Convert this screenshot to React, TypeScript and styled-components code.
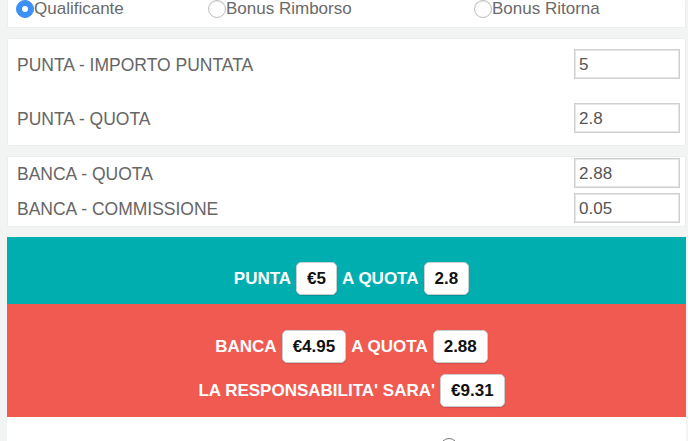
import React from "react";
import styled, { createGlobalStyle } from "styled-components";

const Global = createGlobalStyle`
  html, body { margin: 0; padding: 0; background: #ffffff; }
  body { font-family: "Liberation Sans", Arial, Helvetica, sans-serif; }
  * { box-sizing: border-box; }
`;

const Column = styled.div`
  width: 688px;
  height: 441px;
  overflow: hidden;
  background: #f2f3f3;
  padding: 0 2px 0 7px;
  display: flex;
  flex-direction: column;
  gap: 10px;
  & > * { flex-shrink: 0; }
`;

const Card = styled.div`
  background: #ffffff;
  border: 1px solid #eceeee;
  border-radius: 2px;
`;

const RadioCard = styled(Card)`
  height: 28px;
  border-top: none;
  display: grid;
  grid-template-columns: 192px 266px auto;
  align-items: start;
  padding-left: 8px;
`;

const RadioOption = styled.label`
  display: flex;
  align-items: center;
  font-size: 17px;
  line-height: 18px;
  color: #6a6a6a;
`;

const RadioDot = styled.span<{ $checked?: boolean }>`
  width: 18px;
  height: 18px;
  border-radius: 50%;
  flex: none;
  margin-top: -1px;
  background: ${(p) => (p.$checked ? "#3b8ff6" : "#ffffff")};
  border: 1px solid ${(p) => (p.$checked ? "#3b8ff6" : "#bdbdbd")};
  box-shadow: ${(p) => (p.$checked ? "none" : "inset 0 1px 1px rgba(0,0,0,0.08)")};
  display: flex;
  align-items: center;
  justify-content: center;
  &::after {
    content: "";
    width: 6px;
    height: 6px;
    border-radius: 50%;
    background: #ffffff;
    display: ${(p) => (p.$checked ? "block" : "none")};
  }
`;

const FieldCard = styled(Card)<{ $pad: string; $gap: number }>`
  padding: ${(p) => p.$pad};
  display: flex;
  flex-direction: column;
  gap: ${(p) => p.$gap}px;
`;

const Row = styled.div`
  display: flex;
  align-items: center;
  justify-content: space-between;
  height: 30px;
`;

const Label = styled.span`
  font-size: 17.5px;
  color: #666666;
  padding-left: 9px;
  padding-top: 2px;
`;

const Input = styled.input`
  width: 106px;
  height: 30px;
  margin-right: 5px;
  border: 1px solid #cfcfcf;
  box-shadow: inset 0 0 0 1px #e6e6e6;
  font-family: "Liberation Sans", Arial, sans-serif;
  font-size: 17px;
  color: #555555;
  padding: 2px 4px 0;
  background: #ffffff;
  outline: none;
`;

const ResultGroup = styled.div`
  display: flex;
  flex-direction: column;
`;

const Band = styled.div<{ $bg: string; $pad: string; $gap: number }>`
  background: ${(p) => p.$bg};
  padding: ${(p) => p.$pad};
  padding-left: 10px;
  display: flex;
  flex-direction: column;
  align-items: center;
  gap: ${(p) => p.$gap}px;
`;

const Line = styled.div`
  display: flex;
  align-items: center;
  gap: 5px;
  font-size: 17px;
  font-weight: 700;
  color: #ffffff;
  height: 33px;
`;

const Pill = styled.span`
  height: 33px;
  display: flex;
  align-items: center;
  padding: 1px 10px 0;
  background: #ffffff;
  border: 1px solid #c9cdd0;
  border-radius: 5px;
  box-shadow: 0 1px 1px rgba(0, 0, 0, 0.15);
  color: #111111;
  font-weight: 700;
  font-size: 17px;
`;

const BottomCard = styled.div`
  background: #ffffff;
  height: 60px;
  padding: 21px 0 0 433px;
`;

const BottomRadio = styled.span`
  display: block;
  width: 18px;
  height: 18px;
  border-radius: 50%;
  border: 1.5px solid #777777;
  background: #ffffff;
`;

export default function App() {
  return (
    <>
      <Global />
      <Column>
        <RadioCard>
          <RadioOption>
            <RadioDot $checked />
            Qualificante
          </RadioOption>
          <RadioOption>
            <RadioDot />
            Bonus Rimborso
          </RadioOption>
          <RadioOption>
            <RadioDot />
            Bonus Ritorna
          </RadioOption>
        </RadioCard>

        <FieldCard $pad="10px 0 12px" $gap={24}>
          <Row>
            <Label>PUNTA - IMPORTO PUNTATA</Label>
            <Input defaultValue="5" />
          </Row>
          <Row>
            <Label>PUNTA - QUOTA</Label>
            <Input defaultValue="2.8" />
          </Row>
        </FieldCard>

        <FieldCard $pad="1px 0 3px" $gap={5}>
          <Row>
            <Label>BANCA - QUOTA</Label>
            <Input defaultValue="2.88" />
          </Row>
          <Row>
            <Label>BANCA - COMMISSIONE</Label>
            <Input defaultValue="0.05" />
          </Row>
        </FieldCard>

        <ResultGroup>
          <Band $bg="#00aeaf" $pad="25px 0 9px" $gap={0}>
            <Line>
              PUNTA <Pill>€5</Pill> A QUOTA <Pill>2.8</Pill>
            </Line>
          </Band>
          <Band $bg="#f15a50" $pad="26px 0 10px" $gap={11}>
            <Line>
              BANCA <Pill>€4.95</Pill> A QUOTA <Pill>2.88</Pill>
            </Line>
            <Line>
              LA RESPONSABILITA' SARA' <Pill>€9.31</Pill>
            </Line>
          </Band>
          <BottomCard>
            <BottomRadio />
          </BottomCard>
        </ResultGroup>
      </Column>
    </>
  );
}
